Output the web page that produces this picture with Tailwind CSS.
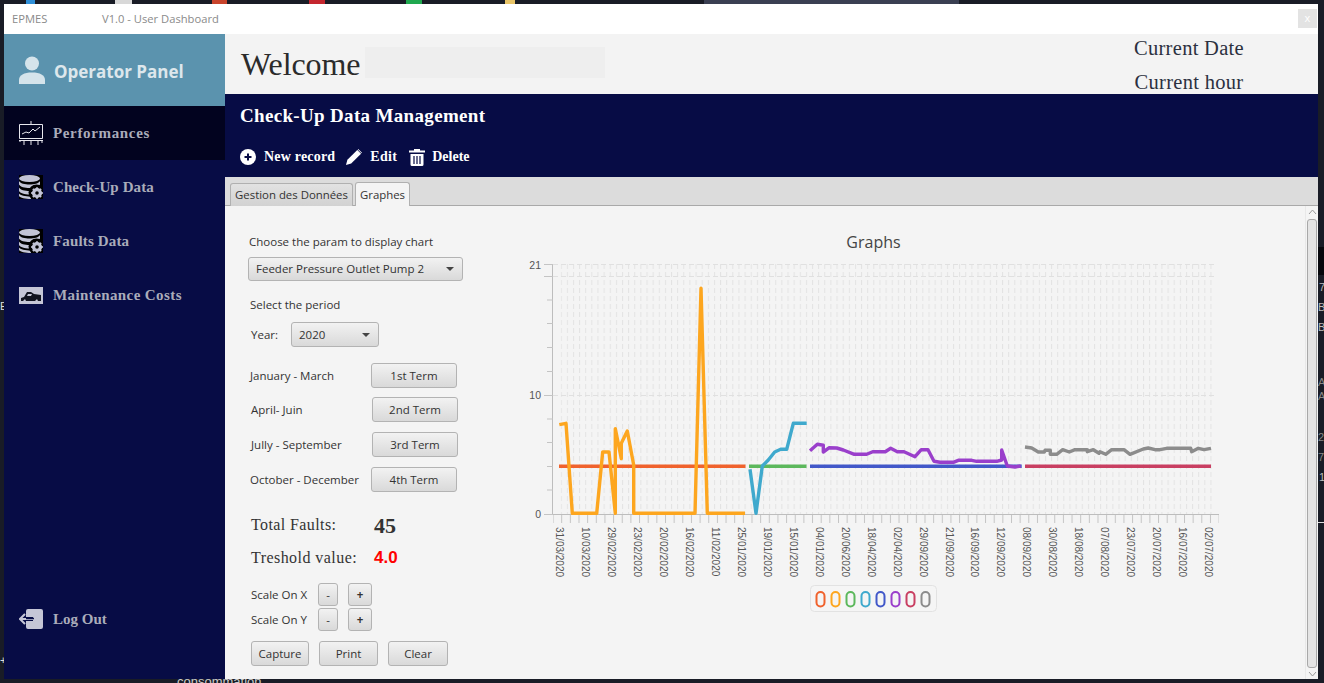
<!DOCTYPE html>
<html>
<head>
<meta charset="utf-8">
<script src="https://cdn.jsdelivr.net/npm/@tailwindcss/browser@4"></script>
</head>
<body class="relative w-[1324px] h-[683px] overflow-hidden bg-[#191c26] font-['Open_Sans',sans-serif] text-[#333]">
<!-- desktop fragments behind the window -->
<div class="absolute left-[704px] top-0 w-[255px] h-[4px] bg-[#3a3f52]"></div>
<div class="absolute left-[26px] top-0 w-[9px] h-[4px] bg-[#2f8fd8]"></div>
<div class="absolute left-[115px] top-0 w-[17px] h-[4px] bg-[#d8d8d8]"></div>
<div class="absolute left-[212px] top-0 w-[15px] h-[4px] bg-[#c8442c]"></div>
<div class="absolute left-[309px] top-0 w-[16px] h-[4px] bg-[#c4262e]"></div>
<div class="absolute left-[406px] top-0 w-[16px] h-[4px] bg-[#1fa84f]"></div>
<div class="absolute left-[505px] top-0 w-[10px] h-[4px] bg-[#e8c468]"></div>
<div class="absolute left-[1318px] top-[247px] w-[6px] h-[28px] bg-[#06070c]"></div>
<div class="absolute left-[1318px] top-[522px] w-[6px] h-px bg-[#ddd]"></div>
<div class="absolute left-[1319px] top-[279px] text-[11px] leading-4 text-[#bbb] font-['Liberation_Sans',sans-serif]">7</div>
<div class="absolute left-[1318px] top-[299px] text-[11px] leading-4 text-[#bbb] font-['Liberation_Sans',sans-serif]">B</div>
<div class="absolute left-[1318px] top-[319px] text-[11px] leading-4 text-[#bbb] font-['Liberation_Sans',sans-serif]">B</div>
<div class="absolute left-[1318px] top-[374px] text-[11px] leading-4 text-[#888] font-['Liberation_Sans',sans-serif]">A</div>
<div class="absolute left-[1318px] top-[388px] text-[11px] leading-4 text-[#888] font-['Liberation_Sans',sans-serif]">A</div>
<div class="absolute left-[1318px] top-[429px] text-[11px] leading-4 text-[#888] font-['Liberation_Sans',sans-serif]">2</div>
<div class="absolute left-[1318px] top-[449px] text-[11px] leading-4 text-[#888] font-['Liberation_Sans',sans-serif]">7</div>
<div class="absolute left-[1319px] top-[469px] text-[11px] leading-4 text-[#bbb] font-['Liberation_Sans',sans-serif]">1</div>
<div class="absolute left-0 top-[298px] w-[4px] overflow-hidden text-[11px] leading-4 text-[#ddd] font-['Liberation_Sans',sans-serif]">E</div>
<div class="absolute left-0 top-[652px] w-[4px] overflow-hidden text-[11px] leading-4 text-[#ddd] font-['Liberation_Sans',sans-serif]">+</div>
<div class="absolute left-[177px] top-[674px] text-[13px] leading-4 text-[#ccc] font-['Liberation_Sans',sans-serif]">consommation</div>

<!-- window -->
<div class="absolute left-[4px] top-[4px] w-[1314px] h-[675px] flex flex-col bg-[#f4f4f4]">
  <!-- title bar -->
  <div class="h-[30px] shrink-0 bg-white flex items-center relative">
    <span class="ml-[8px] w-[90px] text-[11.200px] text-[#8a8a8a]">EPMES</span>
    <span class="text-[11.200px] text-[#8a8a8a]">V1.0 - User Dashboard</span>
    <span class="ml-auto mr-px mt-[-1px] w-[19px] h-[19px] bg-[#e3e3e3] text-white text-[11px] leading-[18px] text-center">x</span>
  </div>
  <div class="flex flex-1 min-h-0">
    <!-- sidebar -->
    <aside class="w-[221px] shrink-0 bg-[#070c45] flex flex-col font-['Liberation_Serif',serif] font-bold text-[15px] text-[#aaacba]">
      <div class="h-[72px] bg-[#5b93ae] flex items-center pl-[15px] gap-[9px]">
        <svg class="w-[26px] h-[28px]" viewBox="0 0 26 28" fill="#d5e4eb"><circle cx="13" cy="7.500" r="7"/><path d="M0 28v-4c0-5 5-7.500 13-7.500s13 2.500 13 7.500v4z"/></svg>
        <span class="mt-[2px] font-['Open_Sans',sans-serif] text-[17px] text-[#dde7ec] leading-none">Operator Panel</span>
      </div>
      <div class="h-[54px] bg-[#02031f] flex items-center pl-[15px] gap-[10px]">
        <svg class="w-[24px] h-[25px]" viewBox="0 0 24 25" fill="none" stroke="#e8e8ee" stroke-width="1"><path d="M12 0v3M.5 3.500h23v14H.5z"/><path d="M3 13l4-2 3 1 4-4 2 2 5-4" /><path d="M0 19.500h24M5 20v4M12 20v4M19 20v4M1 20v1M23 20v2"/></svg>
        <span class="tracking-[.65px]">Performances</span>
      </div>
      <div class="h-[54px] flex items-center pl-[15px] gap-[10px]">
        <svg class="w-[24px] h-[24px] bg-black" viewBox="0 0 24 24" fill="#c2c4d6"><ellipse cx="10.500" cy="3.500" rx="10.500" ry="3.500"/><path d="M0 6c1 2.500 6 3.500 10.500 3.500S20 8.500 21 6v3.500c-1 2.500-6 3.500-10.500 3.500S1 12 0 9.500zM0 12.500c1 2.500 6 3.500 10.500 3.500 2 0 7-.5 10.500-3v3c-3 2-8 3.500-10.500 3.500-5 0-9.500-1.500-10.500-3.500zM0 18.500c1.500 2 6 3 12 3v2.500c-6 0-10.500-1-12-3z"/><circle cx="17.500" cy="17.500" r="8" fill="#000"/><circle cx="18" cy="18" r="3.800" fill="none" stroke="#c2c4d6" stroke-width="2.600"/><path d="M18 12.200v11.600M12.200 18h11.600M13.900 13.900l8.200 8.200M22.100 13.900l-8.200 8.200" stroke="#c2c4d6" stroke-width="1.800"/><circle cx="18" cy="18" r="1.800" fill="#000"/></svg>
        <span class="tracking-[.1px]">Check-Up Data</span>
      </div>
      <div class="h-[54px] flex items-center pl-[15px] gap-[10px]">
        <svg class="w-[24px] h-[24px] bg-black" viewBox="0 0 24 24" fill="#c2c4d6"><ellipse cx="10.500" cy="3.500" rx="10.500" ry="3.500"/><path d="M0 6c1 2.500 6 3.500 10.500 3.500S20 8.500 21 6v3.500c-1 2.500-6 3.500-10.500 3.500S1 12 0 9.500zM0 12.500c1 2.500 6 3.500 10.500 3.500 2 0 7-.5 10.500-3v3c-3 2-8 3.500-10.500 3.500-5 0-9.500-1.500-10.500-3.500zM0 18.500c1.500 2 6 3 12 3v2.500c-6 0-10.500-1-12-3z"/><circle cx="17.500" cy="17.500" r="8" fill="#000"/><circle cx="18" cy="18" r="3.800" fill="none" stroke="#c2c4d6" stroke-width="2.600"/><path d="M18 12.200v11.600M12.200 18h11.600M13.900 13.900l8.200 8.200M22.100 13.900l-8.200 8.200" stroke="#c2c4d6" stroke-width="1.800"/><circle cx="18" cy="18" r="1.800" fill="#000"/></svg>
        <span class="tracking-[.15px]">Faults Data</span>
      </div>
      <div class="h-[54px] flex items-center pl-[15px] gap-[10px]">
        <svg class="w-[24px] h-[17px]" viewBox="0 0 24 17"><rect width="24" height="17" fill="#c5c6d6"/><path d="M2 14v-3l3-1 3-5h4l3 2 7 1v6h-3l-1-2-2 2H7l-1-2-2 2z" fill="#11131f"/><path d="M9 7h4l-1 2H8z" fill="#c5c6d6"/></svg>
        <span class="tracking-[.4px]">Maintenance Costs</span>
      </div>
      <div class="mt-auto mb-[50px] h-[20px] flex items-center pl-[15px] gap-[10px]">
        <svg class="w-[24px] h-[20px]" viewBox="0 0 24 20" fill="#c5c6d6"><path d="M9 0h13a2 2 0 0 1 2 2v16a2 2 0 0 1-2 2H9a2 2 0 0 1-2-2v-6h7V8H7V2a2 2 0 0 1 2-2z"/><path d="M16 10H2M6 5l-5 5 5 5" fill="none" stroke="#c5c6d6" stroke-width="2"/><path d="M7 9.500h8" stroke="#070c45" stroke-width="1.500"/></svg>
        <span>Log Out</span>
      </div>
    </aside>
    <!-- main -->
    <main class="flex-1 min-w-0 flex flex-col">
      <header class="h-[60px] shrink-0 bg-[#f3f3f3] flex font-['Liberation_Serif',serif]">
        <span class="ml-[16px] mt-[10px] w-[119px] text-[32px] leading-[40px] tracking-[-.1px] text-[#2b2b2b]">Welcome</span>
        <span class="ml-[5px] mt-[13px] w-[240px] h-[31px] bg-[#eeeeee]"></span>
        <div class="ml-auto mr-[74px] flex flex-col items-center text-[20.500px] leading-[34px] tracking-[.3px] text-[#2b3040]">
          <span class="-mt-[3px]">Current Date</span>
          <span>Current hour</span>
        </div>
      </header>
      <section class="h-[83px] shrink-0 bg-[#070c45] text-white font-['Liberation_Serif',serif] pl-[15px]">
        <h1 class="mt-[10px] text-[19px] leading-[24px] font-bold tracking-[.33px]">Check-Up Data Management</h1>
        <div class="mt-[20px] flex items-center text-[14px] font-bold leading-[18px]">
          <svg class="w-[16px] h-[16px]" viewBox="0 0 16 16"><circle cx="8" cy="8" r="8" fill="#fff"/><path d="M8 4.500v7M4.500 8h7" stroke="#070c45" stroke-width="2"/></svg>
          <span class="ml-[8px] tracking-[.2px]">New record</span>
          <svg class="ml-[11px] w-[16px] h-[16px]" viewBox="0 0 17 17" fill="#fff"><path d="M0 17l1.500-5.500L12 1l4 4L5.500 15.500z"/><path d="M13 0l4 4-.5.500-4-4z"/></svg>
          <span class="ml-[8px] tracking-[.3px]">Edit</span>
          <svg class="ml-[12px] w-[16px] h-[17px]" viewBox="0 0 16 17" fill="#fff"><path d="M5 0h6v1.500h5V3.500H0V1.500h5zM1.500 5h13v10.500a1.500 1.500 0 0 1-1.500 1.500H3a1.500 1.500 0 0 1-1.500-1.500z"/><path d="M5 7v8M8 7v8M11 7v8" stroke="#070c45" stroke-width="1.200"/></svg>
          <span class="ml-[7px]">Delete</span>
        </div>
      </section>
      <!-- tabs -->
      <nav class="h-[29px] shrink-0 bg-[#dcdcdc] border-b border-[#a9a9a9] flex items-end pl-[5px] gap-[2px] text-[11.400px]">
        <span class="h-[23px] w-[123px] -mb-px flex items-center justify-center bg-linear-to-b from-[#e2e2e2] to-[#d2d2d2] border border-[#b0b0b0] border-b-0 rounded-t-[3px]">Gestion des Données</span>
        <span class="h-[24px] w-[55px] -mb-px flex items-center justify-center bg-[#f4f4f4] border border-[#b0b0b0] border-b-0 rounded-t-[3px]">Graphes</span>
      </nav>
      <!-- content -->
      <div class="flex-1 min-h-0 flex text-[11.500px]">
        <!-- controls -->
        <div class="w-[295px] shrink-0 flex flex-col pl-[23px]">
          <label class="mt-[27px] ml-px leading-[18px]">Choose the param to display chart</label>
          <div class="mt-[6px] w-[215px] h-[24px] flex items-center justify-between px-[7px] bg-linear-to-b from-[#f2f2f2] to-[#d9d9d9] border border-[#b3b3b3] rounded-[3px]">
            <span>Feeder Pressure Outlet Pump 2</span>
            <span class="mr-[1px] w-0 h-0 border-x-[4px] border-x-transparent border-t-[4px] border-t-[#444]"></span>
          </div>
          <label class="mt-[15px] ml-[2px] leading-[18px]">Select the period</label>
          <div class="mt-[8px] ml-[3px] flex items-center">
            <span class="w-[40px]">Year:</span>
            <div class="w-[88px] h-[25px] flex items-center justify-between px-[7px] bg-linear-to-b from-[#f2f2f2] to-[#d9d9d9] border border-[#b3b3b3] rounded-[3px]">
              <span>2020</span>
              <span class="mr-[1px] w-0 h-0 border-x-[4px] border-x-transparent border-t-[4px] border-t-[#444]"></span>
            </div>
          </div>
          <div class="mt-[16px] ml-[2px] flex items-center w-[207px] justify-between h-[25px]">
            <span>January - March</span>
            <button class="w-[86px] h-[25px] bg-linear-to-b from-[#f2f2f2] to-[#d9d9d9] border border-[#b3b3b3] rounded-[3px]">1st Term</button>
          </div>
          <div class="mt-[9px] ml-[3px] flex items-center w-[207px] justify-between h-[25px]">
            <span>April- Juin</span>
            <button class="w-[86px] h-[25px] bg-linear-to-b from-[#f2f2f2] to-[#d9d9d9] border border-[#b3b3b3] rounded-[3px]">2nd Term</button>
          </div>
          <div class="mt-[10px] ml-[3px] flex items-center w-[207px] justify-between h-[25px]">
            <span>Jully - September</span>
            <button class="w-[86px] h-[25px] bg-linear-to-b from-[#f2f2f2] to-[#d9d9d9] border border-[#b3b3b3] rounded-[3px]">3rd Term</button>
          </div>
          <div class="mt-[10px] ml-[2px] flex items-center w-[207px] justify-between h-[25px]">
            <span>October - December</span>
            <button class="w-[86px] h-[25px] bg-linear-to-b from-[#f2f2f2] to-[#d9d9d9] border border-[#b3b3b3] rounded-[3px]">4th Term</button>
          </div>
          <div class="mt-[22px] ml-[3px] flex items-center h-[22px] font-['Liberation_Serif',serif] text-[16px]">
            <span class="w-[123px] tracking-[.4px]">Total Faults:</span>
            <span class="text-[22px] font-bold">45</span>
          </div>
          <div class="mt-[11px] ml-[3px] flex items-center h-[22px] font-['Liberation_Serif',serif] text-[16px]">
            <span class="w-[123px] tracking-[.45px]">Treshold value:</span>
            <span class="font-['Liberation_Sans',sans-serif] font-bold text-[17px] text-[#ff0000]">4.0</span>
          </div>
          <div class="mt-[14px] ml-[3px] flex items-center h-[23px]">
            <span class="w-[67px]">Scale On X</span>
            <button class="w-[20px] h-[23px] bg-linear-to-b from-[#f2f2f2] to-[#d9d9d9] border border-[#b3b3b3] rounded-[3px]">-</button>
            <button class="ml-[10px] w-[24px] h-[23px] font-bold bg-linear-to-b from-[#f2f2f2] to-[#d9d9d9] border border-[#b3b3b3] rounded-[3px]">+</button>
          </div>
          <div class="mt-[2px] ml-[3px] flex items-center h-[23px]">
            <span class="w-[67px]">Scale On Y</span>
            <button class="w-[20px] h-[23px] bg-linear-to-b from-[#f2f2f2] to-[#d9d9d9] border border-[#b3b3b3] rounded-[3px]">-</button>
            <button class="ml-[10px] w-[24px] h-[23px] font-bold bg-linear-to-b from-[#f2f2f2] to-[#d9d9d9] border border-[#b3b3b3] rounded-[3px]">+</button>
          </div>
          <div class="mt-[10px] ml-[3px] flex gap-[10px]">
            <button class="w-[58px] h-[25px] bg-linear-to-b from-[#f2f2f2] to-[#d9d9d9] border border-[#b3b3b3] rounded-[3px]">Capture</button>
            <button class="w-[59px] h-[25px] bg-linear-to-b from-[#f2f2f2] to-[#d9d9d9] border border-[#b3b3b3] rounded-[3px]">Print</button>
            <button class="w-[60px] h-[25px] bg-linear-to-b from-[#f2f2f2] to-[#d9d9d9] border border-[#b3b3b3] rounded-[3px]">Clear</button>
          </div>
        </div>
        <!-- chart -->
        <div class="flex-1 min-w-0 pt-[19px]">
          <svg class="block w-[710px] h-[400px]" viewBox="520 225 710 400" font-family="Liberation Sans, sans-serif" font-size="10" fill="#555">
            <defs>
              <pattern id="vg" x="560.7" y="264" width="6.13" height="8" patternUnits="userSpaceOnUse"><path d="M.5 0v5" stroke="#e3e3e3" fill="none"/></pattern>
              <pattern id="xt" x="561.2" y="514" width="8.65" height="10" patternUnits="userSpaceOnUse"><path d="M.5 0v9" stroke="#c4c4c4" fill="none"/></pattern>
            </defs>
            <text x="873.500" y="247.500" text-anchor="middle" font-family="Open Sans, sans-serif" font-size="16" fill="#444">Graphs</text>
            <rect x="560.700" y="264" width="652" height="250" fill="url(#vg)"/>
            <path d="M553 264.500H1217M553 276.500H1217M553 395.500H1217" stroke="#e0e0e0" stroke-dasharray="5 3" fill="none"/>
            <rect x="553" y="514.500" width="666" height="9" fill="url(#xt)"/>
            <path d="M552.500 264v251M553 514.500H1219" stroke="#bdbdbd" fill="none"/>
            <path d="M544 264.500h9M544 276.500h9M544 395.500h9M544 514.500h9M547 300h6M547 323.500h6M547 347.500h6M547 371.500h6M547 419h6M547 442.500h6M547 466.500h6M547 490h6" stroke="#c4c4c4" fill="none"/>
            <text x="541" y="269" text-anchor="end" font-size="10.500">21</text>
            <text x="541" y="399" text-anchor="end" font-size="10.500">10</text>
            <text x="541" y="518" text-anchor="end" font-size="10.500">0</text>
            <g fill="none" stroke-width="3.400" stroke-linejoin="round">
              <path d="M559 466.300H745.500" stroke="#f0622d"/>
              <path d="M559.300 424.700L566 423.300 572.300 513.300H596.700L602.700 452H609L615.300 513.300V428.700L621.300 458.700V443.300L627.300 431 633.700 465V513.300H695L701 288.300 707.300 513.300H745" stroke="#fda61f"/>
              <path d="M749 466.300H806.500" stroke="#5cb85c"/>
              <path d="M750 469.300L756 513.300 762.300 466 768.300 460 774.700 452 780.700 449.300H786.700L793.300 423.300H806.700" stroke="#3fa9cd"/>
              <path d="M810 466.300H1021.700" stroke="#4258c9"/>
              <path d="M810 450.700L817.300 444.300 823.300 445.300V452L829.300 447.700 836.700 448 843.300 450 854.300 454.300H866.700L872.700 451.700H885.300L890.700 448.300 897.300 451.700H904L915 456.700 921.300 449.700H928L934 461.300 940 462.300H953.300L958.300 460.300H971.700L976.700 461.300H996.700L1001.700 460V450L1007.300 466 1015 467 1020.700 466" stroke="#9a3fcb"/>
              <path d="M1025 466.300H1211" stroke="#c93f62"/>
              <path d="M1025 447L1031.700 448 1038.300 452H1044.300L1045 450.300H1050.300V454.300H1056.700L1062.700 449.700 1069.300 452 1075 449.700H1087.300V451.700L1093.300 449.700 1099 453.300 1100 451.700 1105.700 454.300 1111.700 449.700H1124L1130 454.300 1143.300 449 1148.300 448 1155 449.700H1160L1166.700 448.300H1190.700L1191.700 451.700 1198.300 448.300 1204 449.700 1211 448.300" stroke="#8c8c8c"/>
            </g>
            <g fill="#555">
              <text transform="translate(556,527) rotate(90)">31/03/2020</text>
              <text transform="translate(582,527) rotate(90)">10/03/2020</text>
              <text transform="translate(608,527) rotate(90)">29/02/2020</text>
              <text transform="translate(634,527) rotate(90)">23/02/2020</text>
              <text transform="translate(660,527) rotate(90)">20/02/2020</text>
              <text transform="translate(686,527) rotate(90)">16/02/2020</text>
              <text transform="translate(712,527) rotate(90)">11/02/2020</text>
              <text transform="translate(738,527) rotate(90)">25/01/2020</text>
              <text transform="translate(764,527) rotate(90)">19/01/2020</text>
              <text transform="translate(790,527) rotate(90)">15/01/2020</text>
              <text transform="translate(816,527) rotate(90)">04/01/2020</text>
              <text transform="translate(842,527) rotate(90)">20/06/2020</text>
              <text transform="translate(868,527) rotate(90)">18/04/2020</text>
              <text transform="translate(894,527) rotate(90)">02/04/2020</text>
              <text transform="translate(920,527) rotate(90)">29/09/2020</text>
              <text transform="translate(946,527) rotate(90)">21/09/2020</text>
              <text transform="translate(971,527) rotate(90)">16/09/2020</text>
              <text transform="translate(997,527) rotate(90)">12/09/2020</text>
              <text transform="translate(1023,527) rotate(90)">08/09/2020</text>
              <text transform="translate(1049,527) rotate(90)">30/08/2020</text>
              <text transform="translate(1075,527) rotate(90)">18/08/2020</text>
              <text transform="translate(1101,527) rotate(90)">07/08/2020</text>
              <text transform="translate(1127,527) rotate(90)">23/07/2020</text>
              <text transform="translate(1153,527) rotate(90)">20/07/2020</text>
              <text transform="translate(1179,527) rotate(90)">16/07/2020</text>
              <text transform="translate(1205,527) rotate(90)">02/07/2020</text>
            </g>
            <rect x="810.500" y="585.500" width="126" height="26" rx="4" fill="#f5f5f5" stroke="#e2e2e2"/>
            <g fill="none" stroke-width="2">
              <rect x="816.500" y="592" width="8" height="14.500" rx="4" stroke="#f0622d"/>
              <rect x="831.500" y="592" width="8" height="14.500" rx="4" stroke="#fda61f"/>
              <rect x="846.500" y="592" width="8" height="14.500" rx="4" stroke="#5cb85c"/>
              <rect x="861.500" y="592" width="8" height="14.500" rx="4" stroke="#3fa9cd"/>
              <rect x="876.500" y="592" width="8" height="14.500" rx="4" stroke="#4258c9"/>
              <rect x="891.500" y="592" width="8" height="14.500" rx="4" stroke="#9a3fcb"/>
              <rect x="906.500" y="592" width="8" height="14.500" rx="4" stroke="#c93f62"/>
              <rect x="921.500" y="592" width="8" height="14.500" rx="4" stroke="#8c8c8c"/>
            </g>
          </svg>
        </div>
        <!-- scrollbar -->
        <div class="w-[13px] shrink-0 flex flex-col items-center border-l border-[#e8e8e8]">
          <svg class="mt-[3px] w-[9px] h-[6px]" viewBox="0 0 9 6" fill="none" stroke="#9a9a9a"><path d="M1 5l3.500-4L8 5"/></svg>
          <div class="mt-[4px] w-[10px] h-[449px] rounded-[3px] border border-[#a8a8a8] bg-[#e4e4e4]"></div>
          <svg class="mt-[3px] w-[9px] h-[6px]" viewBox="0 0 9 6" fill="none" stroke="#9a9a9a"><path d="M1 1l3.500 4L8 1"/></svg>
        </div>
      </div>
    </main>
  </div>
</div>
</body>
</html>
